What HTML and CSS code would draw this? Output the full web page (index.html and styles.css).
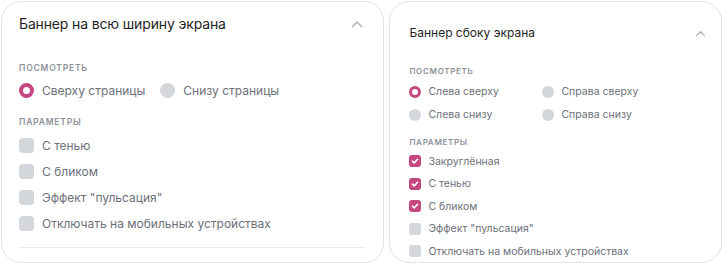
FILE: index.html
```html
<!DOCTYPE html>
<html lang="ru">
  <head>
    <meta charset="UTF-8" />
    <meta name="viewport" content="width=device-width, initial-scale=1.0" />
    <title>Баннеры</title>
    <link rel="stylesheet" href="styles.css">
  </head>
  <body>
    <div class="panels">
      <div class="card card-wide">
        <div class="card-head">
          <h2>Баннер на всю ширину экрана</h2>
          <svg class="chevron" width="12" height="8" viewBox="0 0 12 8"><path d="M1.5 6.5 L6 2 L10.5 6.5" /></svg>
        </div>
        <div class="label label-first">Посмотреть</div>
        <div class="radios">
          <div class="opt"><span class="radio on"></span>Сверху страницы</div>
          <div class="opt"><span class="radio"></span>Снизу страницы</div>
        </div>
        <div class="label label-second">Параметры</div>
        <div class="checks">
          <div class="opt"><span class="box"></span>С тенью</div>
          <div class="opt"><span class="box"></span>С бликом</div>
          <div class="opt"><span class="box"></span>Эффект "пульсация"</div>
          <div class="opt"><span class="box"></span>Отключать на мобильных устройствах</div>
        </div>
        <div class="divider"></div>
      </div>

      <div class="card card-side">
        <div class="card-head">
          <h2>Баннер сбоку экрана</h2>
          <svg class="chevron" width="11" height="7" viewBox="0 0 12 8"><path d="M1.5 6.5 L6 2 L10.5 6.5" /></svg>
        </div>
        <div class="label label-first">Посмотреть</div>
        <div class="radios">
          <div class="opt"><span class="radio on"></span>Слева сверху</div>
          <div class="opt"><span class="radio"></span>Справа сверху</div>
          <div class="opt"><span class="radio"></span>Слева снизу</div>
          <div class="opt"><span class="radio"></span>Справа снизу</div>
        </div>
        <div class="label label-second">Параметры</div>
        <div class="checks">
          <div class="opt"><span class="box on"><svg viewBox="0 0 12 12"><path d="M3.4 6.2 L5.2 7.9 L8.6 4.3" /></svg></span>Закруглённая</div>
          <div class="opt"><span class="box on"><svg viewBox="0 0 12 12"><path d="M3.4 6.2 L5.2 7.9 L8.6 4.3" /></svg></span>С тенью</div>
          <div class="opt"><span class="box on"><svg viewBox="0 0 12 12"><path d="M3.4 6.2 L5.2 7.9 L8.6 4.3" /></svg></span>С бликом</div>
          <div class="opt"><span class="box"></span>Эффект "пульсация"</div>
          <div class="opt"><span class="box"></span>Отключать на мобильных устройствах</div>
        </div>
      </div>
    </div>
  </body>
</html>
```

FILE: styles.css
```css
body {
  font-family: Inter, "Noto Sans", sans-serif;
  margin: 0;
  padding: 0;
  background-color: #ffffff;
}
.panels {
  display: flex;
  gap: 5px;
  padding: 1px 3px 0 1px;
}
.card {
  box-sizing: border-box;
  height: 262px;
  border: 1px solid #e2e2e4;
  border-radius: 20px;
  background-color: white;
  display: flex;
  flex-direction: column;
  overflow: hidden;
}
.card-wide {
  width: 384px;
  padding: 11px 17px 0 17px;
}
.card-side {
  width: 333px;
  padding: 21px 15px 0 19px;
}
.card-head {
  display: flex;
  justify-content: space-between;
  align-items: center;
}
h2 {
  margin: 0;
  font-weight: 400;
  color: #1e1e22;
}
.card-wide h2 {
  font-size: 14px;
  letter-spacing: -0.15px;
  line-height: 22px;
}
.card-side h2 {
  font-size: 12px;
  line-height: 20px;
}
.chevron {
  fill: none;
  stroke: #a9abb0;
  stroke-width: 1.4;
  stroke-linecap: round;
  stroke-linejoin: round;
}
.card-wide .chevron { margin-right: 3px; }
.label {
  text-transform: uppercase;
  font-weight: 600;
  color: #8c9099;
  line-height: 12px;
}
.card-wide .label {
  font-size: 8.5px;
  letter-spacing: 0.8px;
}
.card-side .label {
  font-size: 8px;
  letter-spacing: 0.7px;
}
.card-wide .label-first { margin-top: 27px; }
.card-wide .label-second { margin-top: 16px; }
.card-side .label-first { margin-top: 22px; }
.card-side .label-second { margin-top: 10px; }

.opt {
  display: flex;
  align-items: center;
  color: #6c707a;
  white-space: nowrap;
}
.card-wide .opt {
  font-size: 12px;
  gap: 8px;
}
.card-side .opt {
  font-size: 10.5px;
  gap: 7px;
}
.card-wide .radios {
  display: flex;
  gap: 15px;
  height: 20px;
  margin-top: 6px;
}
.card-side .radios {
  display: grid;
  grid-template-columns: 133px 1fr;
  grid-auto-rows: 23px;
  margin-top: 3px;
}
.radio {
  box-sizing: border-box;
  border-radius: 50%;
  background-color: #d3d6db;
  flex-shrink: 0;
}
.card-wide .radio { width: 15px; height: 15px; }
.card-side .radio { width: 12px; height: 12px; }
.radio.on {
  background-color: #ffffff;
  border: 4px solid #c4487f;
}
.card-side .radio.on { border-width: 3.4px; }

.card-wide .checks {
  margin-top: 4px;
  display: grid;
  grid-auto-rows: 26px;
}
.card-side .checks {
  margin-top: 2px;
  display: grid;
  grid-auto-rows: 22.5px;
}
.box {
  border-radius: 4px;
  background-color: #d3d6db;
  flex-shrink: 0;
  display: flex;
}
.card-wide .box { width: 15px; height: 15px; }
.card-side .box { width: 12px; height: 12px; border-radius: 3px; }
.box.on {
  background-color: #c4487f;
}
.box svg {
  width: 100%;
  height: 100%;
  fill: none;
  stroke: white;
  stroke-width: 1.6;
  stroke-linecap: round;
  stroke-linejoin: round;
}
.divider {
  margin-top: 11px;
  height: 1px;
  background-color: #ececee;
}
```
